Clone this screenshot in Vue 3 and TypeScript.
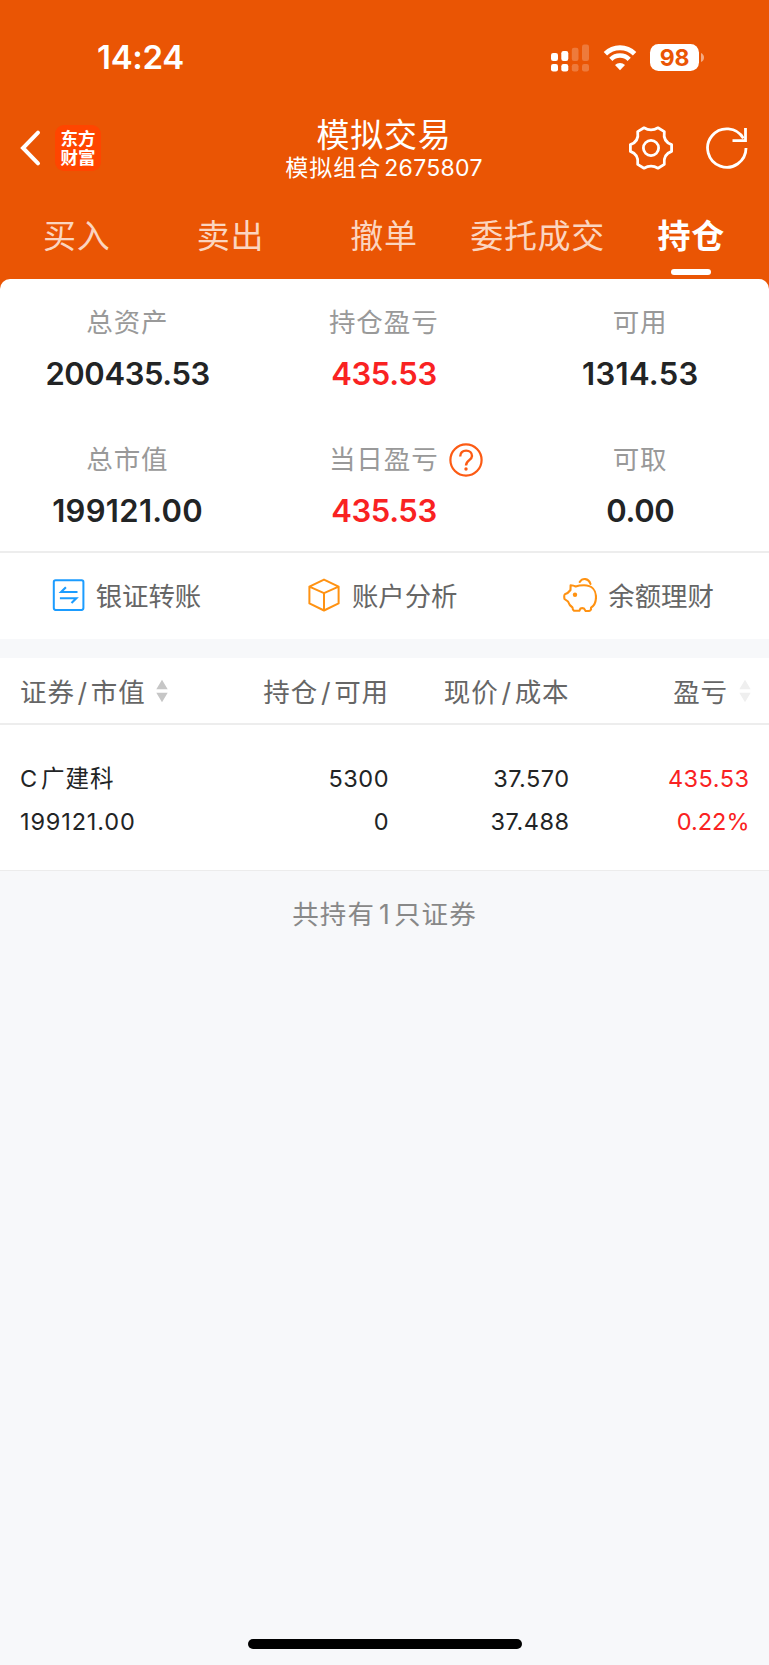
<script setup lang="ts">
interface Stat {
  label: string
  value: string
  up?: boolean
  help?: boolean
  loose?: boolean
}

const tabs: string[] = ['买入', '卖出', '撤单', '委托成交', '持仓']
const activeTab = '持仓'

const stats: Stat[] = [
  { label: '总资产', value: '200435.53' },
  { label: '持仓盈亏', value: '435.53', up: true },
  { label: '可用', value: '1314.53', loose: true },
  { label: '总市值', value: '199121.00', loose: true },
  { label: '当日盈亏', value: '435.53', up: true, help: true },
  { label: '可取', value: '0.00' },
]
</script>

<template>
  <div class="screen">
    <header class="top">
      <div class="status">
        <span class="time">14:24</span>
        <div class="status-icons">
          <svg class="signal" width="38" height="28" viewBox="0 0 38 28" fill="#fff">
            <rect x="0" y="9" width="7" height="8" rx="2.2" />
            <rect x="0" y="20" width="7" height="7.5" rx="2.2" />
            <rect x="10.3" y="7" width="7" height="10" rx="2.2" />
            <rect x="10.3" y="20" width="7" height="7.5" rx="2.2" />
            <g opacity=".22">
              <rect x="20.8" y="3.7" width="6.7" height="13.3" rx="2.2" />
              <rect x="20.8" y="20" width="6.7" height="7.5" rx="2.2" />
              <rect x="31" y="0.5" width="7" height="16.5" rx="2.2" />
              <rect x="31" y="20" width="7" height="7.5" rx="2.2" />
            </g>
          </svg>
          <svg class="wifi" width="34" height="26" viewBox="0 0 34 26">
            <path d="M2.4 8.8A20.6 20.6 0 0 1 31.6 8.8" fill="none" stroke="#fff" stroke-width="4.8" />
            <path d="M7.8 14.4A13 13 0 0 1 26.2 14.4" fill="none" stroke="#fff" stroke-width="4.5" />
            <path d="M17 25.2L12 20.1A7.2 7.2 0 0 1 22 20.1Z" fill="#fff" />
          </svg>
          <div class="battery"><span>98</span></div>
          <svg class="nub" width="3" height="9" viewBox="0 0 3 9"><path d="M0 0Q3 1.5 3 4.5T0 9Z" fill="#fff" opacity=".5" /></svg>
        </div>
      </div>

      <div class="nav">
        <div class="nav-left">
          <svg width="24" height="40" viewBox="0 0 24 40" fill="none" stroke="#fff" stroke-width="4" stroke-linecap="round" stroke-linejoin="miter">
            <path d="M19 4.7L4 20L19 35.3" />
          </svg>
          <div class="logo"><span>东方</span><span>财富</span></div>
        </div>
        <div class="title">
          <h1>模拟交易</h1>
          <p>模拟组合<span class="account">2675807</span></p>
        </div>
        <div class="nav-right">
          <svg width="46" height="46" viewBox="0 0 46 46" fill="none" stroke="#fff" stroke-width="2.8" stroke-linejoin="round">
            <path d="M16 2.8Q23 7 30 2.8L36.3 6.6C35.3 13.5 37.5 17.5 43.6 19.6V26.4C37.5 28.5 35.3 32.5 36.3 39.4L30 43.2Q23 39 16 43.2L9.7 39.4C10.7 32.5 8.5 28.5 2.4 26.4V19.6C8.5 17.5 10.7 13.5 9.7 6.6Z" />
            <circle cx="23" cy="23" r="7.6" />
          </svg>
          <svg width="44" height="44" viewBox="0 0 44 44" fill="none" stroke="#fff" stroke-width="2.8">
            <path d="M41 22A19.2 19.2 0 1 1 38.4 12.4" />
            <path d="M40.5 2V14.6H27.5" />
          </svg>
        </div>
      </div>

      <nav class="tabs">
        <div v-for="tab in tabs" :key="tab" class="tab" :class="{ active: tab === activeTab }">{{ tab }}</div>
      </nav>
    </header>

    <section class="panel">
      <div class="stats">
        <div v-for="s in stats" :key="s.label" class="stat">
          <div class="label">
            {{ s.label }}
            <svg v-if="s.help" class="help" width="34" height="34" viewBox="0 0 34 34" fill="none" stroke="#fc5b14" stroke-width="2.2">
              <circle cx="17" cy="17" r="15.6" />
              <path d="M11.2 13.4C11.2 9.7 13.6 7.6 17.1 7.6S23 9.8 23 12.9C23 17 17 17.3 17 22.4" stroke-width="2.4" />
              <circle cx="17" cy="26" r="1.7" fill="#fc5b14" stroke="none" />
            </svg>
          </div>
          <div class="value" :class="{ up: s.up, loose: s.loose }">{{ s.value }}</div>
        </div>
      </div>

      <div class="actions">
        <div class="action">
          <svg width="34" height="34" viewBox="0 0 34 34" fill="none" stroke="#1b9cff" stroke-width="2">
            <rect x="2.8" y="2.3" width="29.6" height="29.6" rx="1.8" />
            <path d="M26.500 14H10.1L14.9 9.2M8.9 20.3H25.3L20.5 25" stroke-width="2.1" />
          </svg>
          <span>银证转账</span>
        </div>
        <div class="action">
          <svg width="34" height="34" viewBox="0 0 34 34" fill="none" stroke="#ff9212" stroke-width="2" stroke-linejoin="round">
            <path d="M17 1.6L31.6 8.6V25.4L17 32.5L2.4 25.4V8.6ZM2.4 8.6L17 15.2L31.6 8.6M17 15.2V32.5" />
          </svg>
          <span>账户分析</span>
        </div>
        <div class="action">
          <svg width="34" height="34" viewBox="0 0 34 34" fill="none" stroke="#ff9212" stroke-width="2.1" stroke-linejoin="round" stroke-linecap="round">
            <path d="M7.6 7.2Q10.5 7.3 12.7 8.5Q16 7.3 21 7.3C29 7.3 33 12.3 33 19C33 24 30.8 28 28 29.7V31.5Q27.5 33 25.5 33H22.6L21 30.5Q19 29.8 17.5 30.5L16.4 32.7H11Q9.5 32 9.5 29.5Q6.3 27.5 5 23.5L1.5 21Q.8 17.5 1.8 16.3Q4.8 15.6 7.5 12Z" />
            <path d="M16.7 4C19.5-.2 25.5-.2 27.5 6" />
            <circle cx="12" cy="16.8" r="2.2" fill="#ff9212" stroke="none" />
          </svg>
          <span>余额理财</span>
        </div>
      </div>
    </section>

    <section class="holdings">
      <div class="row head">
        <div class="cell sortable">
          <span>证券<i>/</i>市值</span>
          <svg width="12" height="24" viewBox="0 0 12 24" fill="#c6c6c6"><path d="M6 .8L11.7 10.3H.3ZM6 23.2L11.7 13.7H.3Z" /></svg>
        </div>
        <div class="cell">持仓<i>/</i>可用</div>
        <div class="cell">现价<i>/</i>成本</div>
        <div class="cell sortable last">
          <span>盈亏</span>
          <svg width="12" height="24" viewBox="0 0 12 24" fill="#efefef"><path d="M6 .8L11.7 10.3H.3ZM6 23.2L11.7 13.7H.3Z" /></svg>
        </div>
      </div>
      <div class="row body">
        <div class="cell"><p class="name"><span class="prefix">C</span>广建科</p><p class="loose">199121.00</p></div>
        <div class="cell"><p>5300</p><p>0</p></div>
        <div class="cell"><p>37.570</p><p>37.488</p></div>
        <div class="cell up"><p>435.53</p><p class="percent">0.22%</p></div>
      </div>
    </section>

    <div class="summary">共持有<span class="count">1</span>只证券</div>
    <div class="home-bar"></div>
  </div>
</template>

<style>
body {
  background: #f7f8fa;
}
</style>

<style scoped>
.screen {
  width: 769px;
  height: 1665px;
  display: flex;
  flex-direction: column;
  background: #f7f8fa;
  color: #222425;
  font-family: Inter, "Noto Sans CJK SC", sans-serif;
  font-weight: 400;
  overflow: hidden;
}
h1, p {
  margin: 0;
  font-weight: 400;
}
svg {
  display: block;
  flex: none;
}
.top {
  height: 289px;
  flex: none;
  background: #ea5504;
  color: #fff;
}
.status {
  height: 115px;
  box-sizing: border-box;
  display: flex;
  justify-content: space-between;
  padding: 37px 66px 0 97px;
}
.time {
  font-size: 33px;
  line-height: 41px;
  font-weight: 600;
  letter-spacing: -.3px;
}
.status-icons {
  display: flex;
  height: 41px;
  align-items: center;
}
.wifi {
  margin-left: 14px;
}
.battery {
  width: 49px;
  height: 27px;
  margin-left: 13px;
  border-radius: 8.5px;
  background: #fff;
  color: #ea5504;
  font-size: 23px;
  line-height: 28px;
  font-weight: 700;
  letter-spacing: -.3px;
  text-align: center;
}
.nub {
  margin: 0 -1px 0 2px;
}
.nav {
  height: 66px;
  display: grid;
  grid-template-columns: 1fr auto 1fr;
  align-items: center;
  padding: 0 20px 0 19px;
}
.nav-left,
.nav-right {
  display: flex;
  align-items: center;
  padding-bottom: 3px;
}
.nav-left {
  gap: 12px;
}
.nav-right {
  justify-content: flex-end;
  gap: 31px;
}
.logo {
  width: 46px;
  height: 46px;
  border-radius: 9px;
  background: #ff4500;
  display: flex;
  flex-direction: column;
  align-items: center;
  justify-content: center;
  font-size: 17.5px;
  line-height: 19.5px;
  font-weight: 700;
}
.title {
  padding-top: 2px;
  text-align: center;
}
.title h1 {
  font-size: 33px;
  line-height: 36px;
  letter-spacing: .7px;
}
.title p {
  font-size: 23px;
  line-height: 31px;
  letter-spacing: 1px;
}
.account {
  margin-left: 3px;
  letter-spacing: .3px;
}
.tabs {
  width: 768px;
  height: 98px;
  display: grid;
  grid-template-columns: repeat(5, 1fr);
}
.tab {
  display: flex;
  flex-direction: column;
  align-items: center;
  padding-top: 31px;
  font-size: 33px;
  line-height: 48px;
  letter-spacing: .7px;
  white-space: nowrap;
  color: #fbd5c0;
}
.tab.active {
  color: #fff;
  font-weight: 700;
}
.tab.active::after {
  content: "";
  width: 40px;
  height: 6px;
  margin-top: 9px;
  border-radius: 3px;
  background: #fff;
}
.panel {
  flex: none;
  height: 360px;
  margin-top: -10px;
  border-radius: 10px 10px 0 0;
  background: #fff;
}
.stats {
  height: 274px;
  box-sizing: border-box;
  border-bottom: 2px solid #ededed;
  display: grid;
  grid-template-columns: repeat(3, 1fr);
  grid-template-rows: 137px 135px;
}
.stat {
  display: flex;
  flex-direction: column;
  align-items: center;
  padding-top: 24px;
}
.label {
  position: relative;
  margin-right: 1.5px;
  font-size: 26.5px;
  line-height: 39px;
  letter-spacing: .9px;
  color: #999;
}
.help {
  position: absolute;
  left: 100%;
  top: 3px;
  margin-left: 10.5px;
}
.value {
  margin: 12px 1px 0 0;
  font-size: 31px;
  line-height: 40px;
  font-weight: 600;
  letter-spacing: -.4px;
}
.value.loose {
  letter-spacing: .3px;
}
.up {
  color: #f92222;
}
.actions {
  height: 84px;
  display: grid;
  grid-template-columns: repeat(3, 1fr);
}
.action {
  display: flex;
  align-items: center;
  justify-content: center;
  gap: 11px;
  padding-right: 4.5px;
  font-size: 26.4px;
  line-height: 36px;
  color: #666;
}
.action span {
  margin-bottom: -1px;
}
.holdings {
  flex: none;
  margin-top: 19px;
  background: #fff;
  border-bottom: 1px solid #ececec;
}
.row {
  display: grid;
  grid-template-columns: 190px 179px 180.5px 180px;
  padding: 0 20px;
}
.cell {
  text-align: right;
}
.cell:first-child {
  text-align: left;
}
.head {
  height: 65px;
  align-items: center;
  border-bottom: 2px solid #ededed;
  font-size: 26.5px;
  letter-spacing: .9px;
  color: #666;
}
.head i {
  font-style: normal;
  margin: 0 2.8px;
}
.sortable {
  display: flex;
  align-items: center;
  gap: 10.5px;
}
.sortable.last {
  justify-content: flex-end;
  margin-right: -1px;
}
.body {
  height: 145px;
  box-sizing: border-box;
  padding-top: 32px;
  font-size: 23.5px;
  line-height: 43px;
  letter-spacing: .5px;
}
.body .name {
  letter-spacing: .9px;
}
.body .loose {
  letter-spacing: .85px;
}
.body .percent {
  letter-spacing: 0;
}
.prefix {
  margin-right: 3px;
}
.summary {
  margin-top: 23px;
  text-align: center;
  font-size: 26.5px;
  line-height: 40px;
  letter-spacing: 1.1px;
  color: #888;
}
.count {
  margin: 0 3px 0 4px;
}
.home-bar {
  width: 274px;
  height: 10px;
  margin: auto auto 16px 247.5px;
  border-radius: 5px;
  background: #000;
}
</style>
